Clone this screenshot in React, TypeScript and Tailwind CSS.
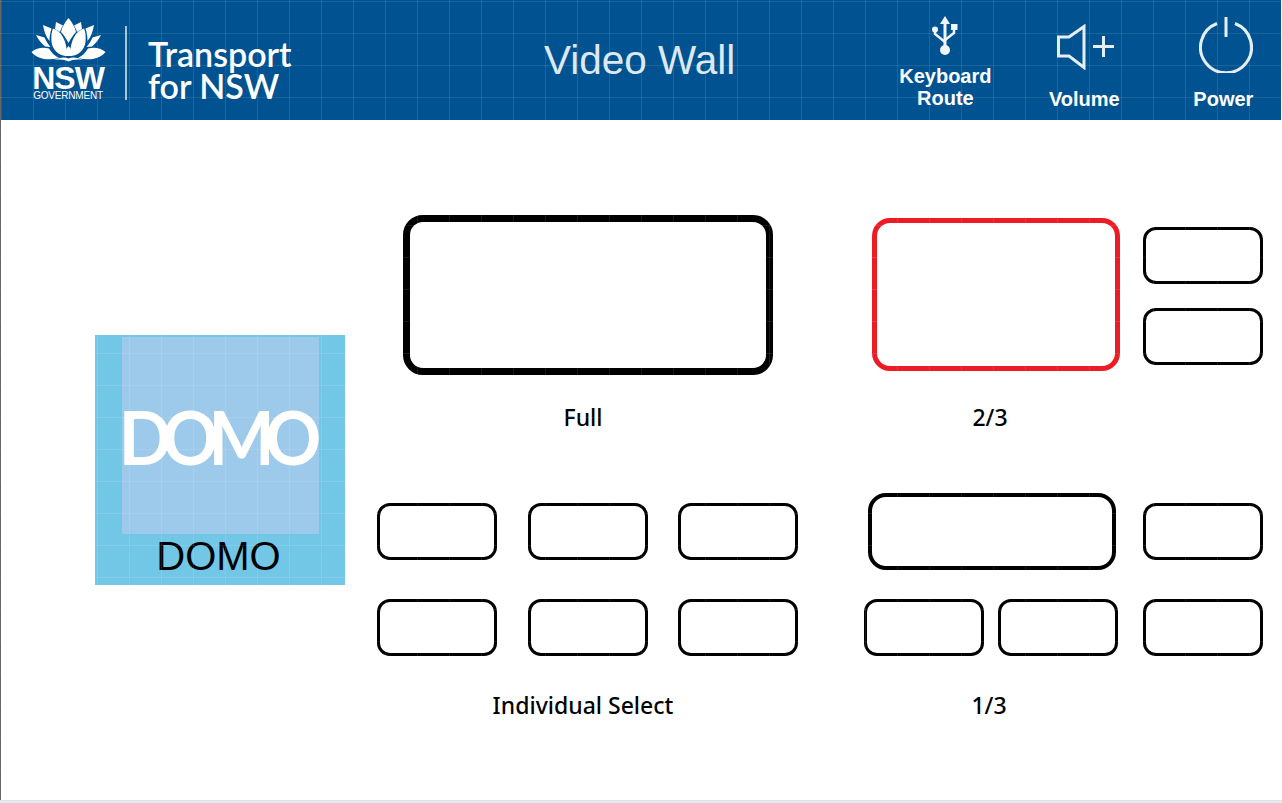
const Box = ({ className }: { className: string }) => (
  <div className={`bg-white ${className}`} />
);

const Small = () => <Box className="h-[57px] w-[120px] rounded-[13px] border-[3px] border-black" />;

const Label = ({ text, className }: { text: string; className: string }) => (
  <div className={`h-[30px] text-center font-['Noto_Sans',sans-serif] text-[23px] leading-[30px] font-medium text-black ${className}`}>
    {text}
  </div>
);

const WaratahSide = () => (
  <>
    <path d="M25 4 L32 7.500 C30.500 10 29.500 12 29 14 C27 12.500 25 11.500 24 11Z" />
    <path d="M22 10.500 C30 13 36 22 36 38 C28 38 21.500 32 20.500 24 C20 18 20.500 14 22 10.500Z" />
    <path d="M12 7 L20.500 10.500 C19 15 18.500 19 18.500 23 C15 19 13 13 12 7Z" />
    <path d="M5 17 L13.500 19.500 C15 23 17 26 19.500 29 L14 28.500 C10 25 7 21 5 17Z" />
    <path d="M0.500 34 C6 29.500 12 29 18 30.500 C20.500 35 24 38 28 40 C17 43 6 41 0.500 34Z" />
  </>
);

const Waratah = () => (
  <svg viewBox="0 0 75 46" className="h-[46px] w-[75px] fill-white">
    <path d="M37.500 0 C41 4 44 9 45 14 C42 17 39.500 21 37.500 25 C35.500 21 33 17 30 14 C31 9 34 4 37.500 0Z" />
    <path d="M37.500 28 C40.500 31 42 35 41 38 L34 38 C33 35 34.500 31 37.500 28Z" />
    <path d="M23 42 C30 39 34 39 37.500 40.500 C41 39 45 39 52 42 C45 41 41 42 37.500 43.500 C34 42 30 41 23 42Z" />
    <WaratahSide />
    <g transform="matrix(-1 0 0 1 75 0)">
      <WaratahSide />
    </g>
  </svg>
);

const UsbIcon = () => (
  <svg viewBox="0 0 26 39" className="h-[39px] w-[26px] fill-[#f2f6fa] stroke-[#f2f6fa]">
    <path d="M13 0 L18 8 L14.500 8 L14.500 32 L11.500 32 L11.500 8 L8 8Z" strokeWidth="0" />
    <circle cx="13" cy="34" r="5" strokeWidth="0" />
    <circle cx="3" cy="13.500" r="3" strokeWidth="0" />
    <rect x="19" y="8" width="6.500" height="6" strokeWidth="0" />
    <path d="M3 14 V18 L13 26 M22 13 V17 L13 24" fill="none" strokeWidth="2.500" />
  </svg>
);

const VolumeIcon = () => (
  <svg viewBox="0 0 60 46" className="h-[46px] w-[60px] fill-none stroke-[#e6eef5]">
    <path d="M2.500 13 H13 L28 2.500 V43.500 L13 32 H2.500Z" strokeWidth="3" />
    <path d="M37 22.500 H58 M47.500 12 V33" strokeWidth="3" />
  </svg>
);

const PowerIcon = () => (
  <svg viewBox="0 0 54 56" className="h-[56px] w-[54px] fill-none stroke-[#e6eef5]">
    <path d="M18 6.500 A25.500 25.500 0 1 0 36 6.500" strokeWidth="3" />
    <path d="M27 0 V20" strokeWidth="3" />
  </svg>
);

export default function App() {
  return (
    <div className="relative flex h-[803px] w-[1282px] flex-col overflow-hidden bg-[#dceaf5] font-['Liberation_Sans',sans-serif]">
      <div className="h-[800px] border-l border-l-[#666666] bg-white">
        {/* HEADER */}
        <header className="flex h-[120px] w-[1280px] items-start bg-[#005291] text-white">
          <div className="mt-[18px] ml-[29px] flex w-[76px] flex-col items-center">
            <Waratah />
            <div className="mt-[1px] text-[32px] leading-[26px] font-bold tracking-[-1px]">NSW</div>
            <div className="text-[10px] leading-[9px] tracking-[-0.200px]">GOVERNMENT</div>
          </div>
          <div className="mt-[26px] ml-[19px] h-[74px] w-[2px] bg-[#a9c4da]" />
          <div className="mt-[38px] ml-[21px] w-[180px] font-['Lato',sans-serif] text-[34px] leading-[32px] font-semibold">
            <div>Transport</div>
            <div>for NSW</div>
          </div>
          <div className="mt-[38px] ml-[216px] text-[40.500px] leading-[44px] text-[#dde8f2]">Video Wall</div>
          <div className="ml-[160px] flex w-[100px] flex-col items-center text-[20px] leading-[22px] font-bold">
            <div className="mt-[16px] h-[49px]">
              <UsbIcon />
            </div>
            <div className="text-center">
              Keyboard
              <br />
              Route
            </div>
          </div>
          <div className="ml-[39px] flex w-[100px] flex-col items-center text-[20px] leading-[22px] font-bold">
            <div className="mt-[24px] ml-[4px] h-[64px]">
              <VolumeIcon />
            </div>
            <div>Volume</div>
          </div>
          <div className="ml-[39px] flex w-[100px] flex-col items-center text-[20px] leading-[22px] font-bold">
            <div className="mt-[17px] ml-[5px] h-[71px]">
              <PowerIcon />
            </div>
            <div>Power</div>
          </div>
        </header>

        {/* BODY */}
        <main className="flex items-start pl-[94px]">
          <div className="mt-[215px] flex h-[250px] w-[250px] flex-col items-center bg-[#72c7e7]">
            <div className="mt-[2px] flex h-[197px] w-[197px] items-center justify-center bg-[#9dc9ea]">
              <span className="scale-y-[1.06] pr-[10px] font-['Lato',sans-serif] text-[70px] leading-none font-bold tracking-[-10px] text-white">DOMO</span>
            </div>
            <div className="-ml-[3px] text-[40px] leading-[44px] text-black">DOMO</div>
          </div>

          <section className="ml-[32px] w-[421px]">
            <Box className="mt-[95px] ml-[26px] h-[160px] w-[370px] rounded-[20px] border-[7px] border-black" />
            <Label text="Full" className="mt-[27px] pr-[9px]" />
            <div className="mt-[71px] grid grid-cols-[120px_120px_120px] justify-between gap-y-[39px]">
              {[0, 1, 2, 3, 4, 5].map(i => (
                <Small key={i} />
              ))}
            </div>
            <Label text="Individual Select" className="mt-[34px] pr-[9px]" />
          </section>

          <section className="ml-[66px] w-[399px]">
            <div className="flex h-[255px] items-start">
              <Box className="mt-[98px] ml-[8px] h-[153px] w-[248px] rounded-[18px] border-[5px] border-[#ed1c24]" />
              <div className="mt-[107px] ml-[23px] flex flex-col gap-y-[24px]">
                <Small />
                <Small />
              </div>
            </div>
            <Label text="2/3" className="mt-[27px] w-[252px]" />
            <div className="mt-[61px] flex items-start">
              <Box className="ml-[4px] h-[77px] w-[248px] rounded-[18px] border-[4px] border-black" />
              <div className="mt-[10px] ml-[27px]">
                <Small />
              </div>
            </div>
            <div className="mt-[29px] flex">
              <Small />
              <div className="ml-[14px]">
                <Small />
              </div>
              <div className="ml-[25px]">
                <Small />
              </div>
            </div>
            <Label text="1/3" className="mt-[34px] w-[250px]" />
          </section>
        </main>
      </div>
      <div className="h-px bg-[#e0e0e0]" />

      {/* grid lines lying over the whole page */}
      <div className="pointer-events-none absolute inset-0 bg-[linear-gradient(to_right,rgba(255,255,255,0.1)_1px,transparent_1px),linear-gradient(to_bottom,rgba(255,255,255,0.1)_1px,transparent_1px)] bg-size-[32px_32px] bg-position-[1px_1px]" />
    </div>
  );
}
